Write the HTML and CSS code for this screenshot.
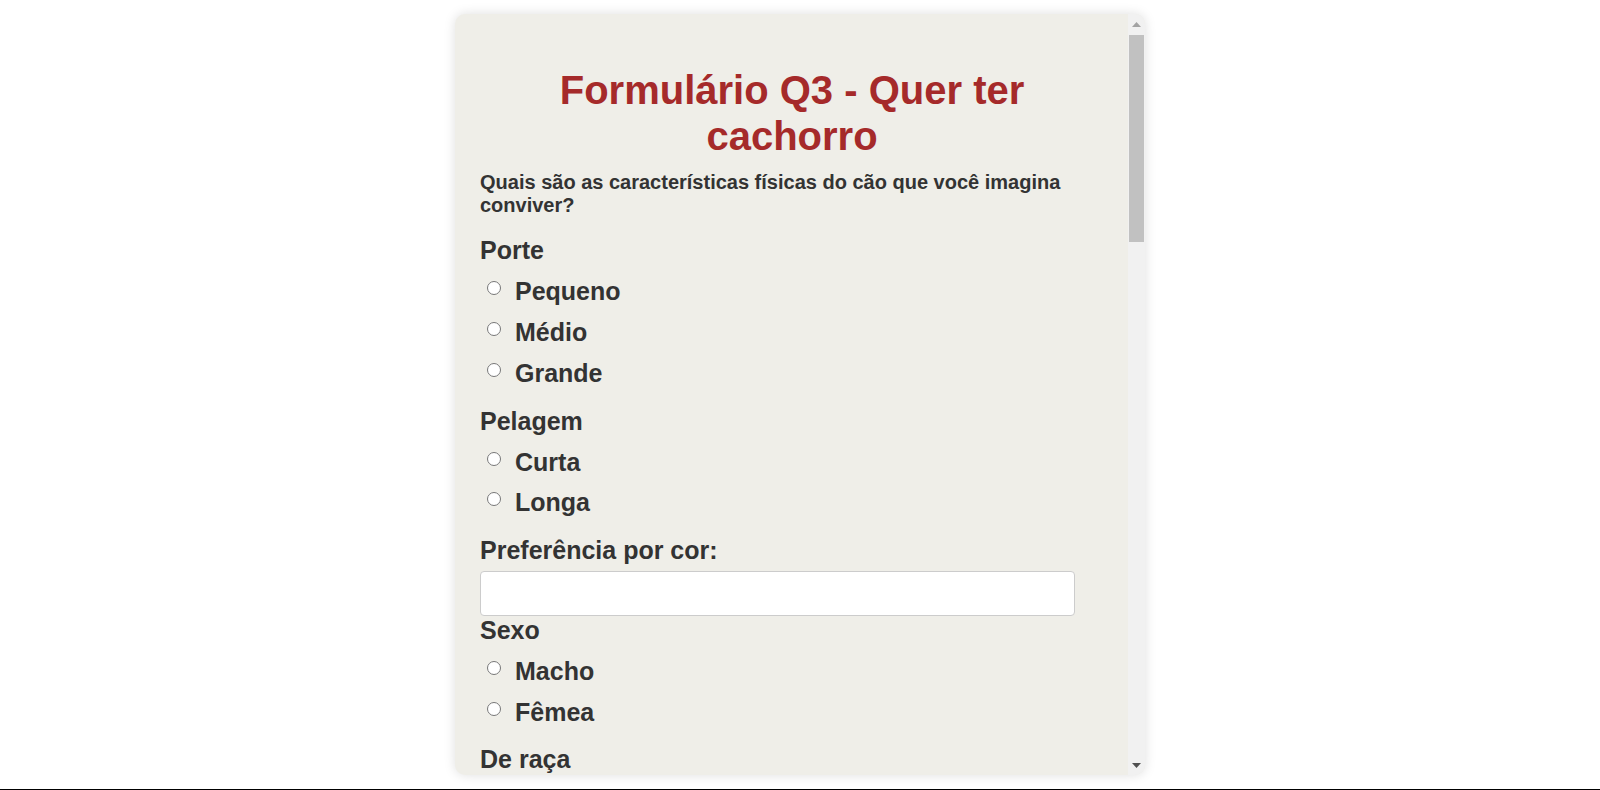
FILE: index.html
```html
<!DOCTYPE html>
<html lang="pt-BR">
<head>
<meta charset="utf-8">
<title>Formulário Q3 - Quer ter cachorro</title>
<link rel="stylesheet" href="styles.css">
</head>
<body>
<div class="card">
<form class="pane">
  <h1 class="title">Formulário Q3 - Quer ter cachorro</h1>
  <p class="question">Quais são as características físicas do cão que você imagina conviver?</p>

  <div class="group">
    <div class="group-label">Porte</div>
    <label class="option"><input type="radio" name="porte"><span>Pequeno</span></label>
    <label class="option"><input type="radio" name="porte"><span>Médio</span></label>
    <label class="option"><input type="radio" name="porte"><span>Grande</span></label>
  </div>

  <div class="group">
    <div class="group-label">Pelagem</div>
    <label class="option"><input type="radio" name="pelagem"><span>Curta</span></label>
    <label class="option"><input type="radio" name="pelagem"><span>Longa</span></label>
  </div>

  <div class="group field">
    <label class="group-label" for="cor">Preferência por cor:</label>
    <input class="text-input" type="text" id="cor">
  </div>

  <div class="group after-field">
    <div class="group-label">Sexo</div>
    <label class="option"><input type="radio" name="sexo"><span>Macho</span></label>
    <label class="option"><input type="radio" name="sexo"><span>Fêmea</span></label>
  </div>

  <div class="group tight">
    <div class="group-label">De raça</div>
    <label class="option"><input type="radio" name="raca"><span>Sim</span></label>
    <label class="option"><input type="radio" name="raca"><span>Não</span></label>
  </div>

  <div class="group">
    <div class="group-label">Idade</div>
    <label class="option"><input type="radio" name="idade"><span>Filhote</span></label>
    <label class="option"><input type="radio" name="idade"><span>Adulto</span></label>
    <label class="option"><input type="radio" name="idade"><span>Idoso</span></label>
  </div>

  <div class="group">
    <div class="group-label">Nível de energia</div>
    <label class="option"><input type="radio" name="energia"><span>Calmo</span></label>
    <label class="option"><input type="radio" name="energia"><span>Moderado</span></label>
    <label class="option"><input type="radio" name="energia"><span>Agitado</span></label>
  </div>

  <p class="question section">Como é o local onde você mora?</p>

  <div class="group">
    <div class="group-label">Tipo de moradia</div>
    <label class="option"><input type="radio" name="moradia"><span>Casa</span></label>
    <label class="option"><input type="radio" name="moradia"><span>Apartamento</span></label>
    <label class="option"><input type="radio" name="moradia"><span>Sítio / Chácara</span></label>
  </div>

  <div class="group">
    <div class="group-label">Possui quintal?</div>
    <label class="option"><input type="radio" name="quintal"><span>Sim</span></label>
    <label class="option"><input type="radio" name="quintal"><span>Não</span></label>
  </div>

  <p class="question section">Como é a sua rotina?</p>

  <div class="group field">
    <label class="group-label" for="horas">Horas fora de casa por dia:</label>
    <input class="text-input" type="text" id="horas">
  </div>

  <div class="group after-field">
    <div class="group-label">Tempo disponível para o cão</div>
    <label class="option"><input type="radio" name="tempo"><span>Menos de 1 hora</span></label>
    <label class="option"><input type="radio" name="tempo"><span>De 1 a 2 horas</span></label>
    <label class="option"><input type="radio" name="tempo"><span>Mais de 2 horas</span></label>
  </div>

  <div class="group">
    <div class="group-label">Já teve cachorro antes?</div>
    <label class="option"><input type="radio" name="teve"><span>Sim</span></label>
    <label class="option"><input type="radio" name="teve"><span>Não</span></label>
  </div>

  <div class="group">
    <div class="group-label">Outros animais em casa?</div>
    <label class="option"><input type="radio" name="outros"><span>Sim</span></label>
    <label class="option"><input type="radio" name="outros"><span>Não</span></label>
  </div>

  <div class="group">
    <div class="group-label">Orçamento mensal</div>
    <label class="option"><input type="radio" name="orcamento"><span>Até R$ 100</span></label>
    <label class="option"><input type="radio" name="orcamento"><span>R$ 100 a R$ 300</span></label>
    <label class="option"><input type="radio" name="orcamento"><span>Mais de R$ 300</span></label>
  </div>

  <div class="group field">
    <label class="group-label" for="cuidador">Quem vai cuidar do cachorro?</label>
    <input class="text-input" type="text" id="cuidador">
  </div>

  <div class="group field">
    <label class="group-label" for="obs">Observações:</label>
    <textarea class="text-area" id="obs"></textarea>
  </div>

  <div class="actions">
    <button class="submit" type="submit">Enviar</button>
  </div>
</form>
<div class="scrollbar" aria-hidden="true">
  <div class="sb-button">
    <svg class="sb-arrow" width="9" height="5" viewBox="0 0 9 5"><polygon points="4.5,0 9,5 0,5" fill="#a3a3a3"/></svg>
  </div>
  <div class="sb-track">
    <div class="sb-thumb"></div>
  </div>
  <div class="sb-button">
    <svg class="sb-arrow" width="9" height="5" viewBox="0 0 9 5"><polygon points="0,0 9,0 4.5,5" fill="#505050"/></svg>
  </div>
</div>
</div>
</body>
</html>
```

FILE: styles.css
```css
html {
  height: 790px;
}

body {
  margin: 0;
  height: 790px;
  box-sizing: border-box;
  padding-top: 14px;
  border-bottom: 1px solid #000;
  background: #ffffff;
  font-family: "Liberation Sans", Arial, sans-serif;
  color: #333333;
  overflow: hidden;
}

.card {
  display: flex;
  width: 690px;
  height: 761px;
  margin: 0 auto;
  background: #efeee8;
  border-radius: 10px;
  box-shadow: 0 0 12px rgba(0, 0, 0, 0.13);
  overflow: hidden;
}

.pane {
  display: block;
  flex: 1;
  min-width: 0;
  box-sizing: border-box;
  padding: 26px 24px 40px 25px;
  overflow-y: auto;
}

.scrollbar {
  flex: none;
  width: 17px;
  display: flex;
  flex-direction: column;
  background: #f1f1f1;
}

.sb-button {
  flex: none;
  height: 20px;
  display: flex;
  align-items: center;
  justify-content: center;
}

.sb-arrow {
  display: block;
}

.sb-track {
  flex: 1;
}

.sb-thumb {
  height: 207px;
  margin: 1px 1px 0;
  background: #c1c1c1;
}

.title {
  margin: 27px 0 12px;
  font-size: 40px;
  line-height: 46px;
  font-weight: bold;
  text-align: center;
  color: #a52a2a;
}

.question {
  margin: 0;
  font-size: 20px;
  line-height: 23px;
  font-weight: bold;
}

.question.section {
  margin-top: 30px;
}

.group {
  display: flex;
  flex-direction: column;
  gap: 12.2px;
  margin-top: 19px;
}

.group.tight {
  margin-top: 18px;
}

.group.field {
  gap: 6px;
}

.group.after-field {
  margin-top: 0;
}

.group-label {
  font-size: 25px;
  line-height: 28.75px;
  font-weight: bold;
}

.option {
  display: flex;
  align-items: flex-start;
  font-size: 25px;
  line-height: 28.75px;
  font-weight: bold;
}

.option input {
  width: 14px;
  height: 14px;
  margin: 4px 14px 0 7px;
  flex: none;
}

.text-input {
  width: 95.3%;
  height: 45px;
  box-sizing: border-box;
  padding: 8px 10px;
  border: 1px solid #cccccc;
  border-radius: 4px;
  background: #ffffff;
  font-family: inherit;
  font-size: 18px;
}

.text-area {
  width: 95.3%;
  height: 120px;
  box-sizing: border-box;
  padding: 8px 10px;
  border: 1px solid #cccccc;
  border-radius: 4px;
  background: #ffffff;
  font-family: inherit;
  font-size: 18px;
  resize: vertical;
}

.actions {
  margin-top: 24px;
}

.submit {
  padding: 12px 28px;
  border: none;
  border-radius: 4px;
  background: #a52a2a;
  color: #ffffff;
  font-family: inherit;
  font-size: 20px;
  font-weight: bold;
}
```
